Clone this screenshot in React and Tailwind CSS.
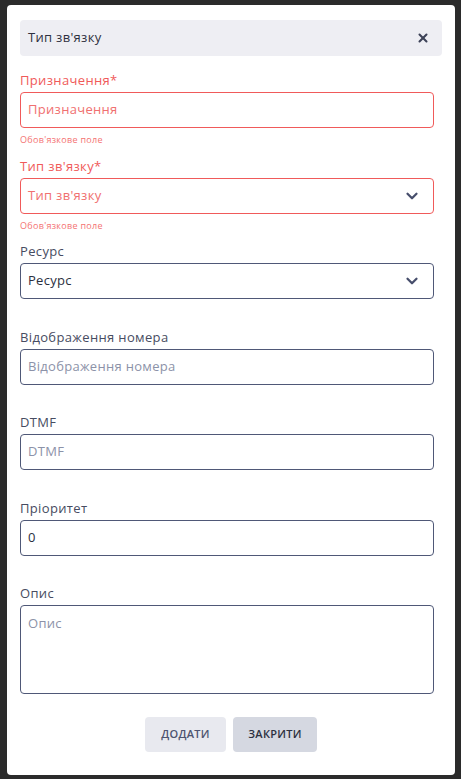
import { ChevronDown, X } from 'lucide-react';

const font = { fontFamily: '"Open Sans", "Noto Sans", sans-serif' };

const Field = ({ label, placeholder, value, error, select, last }) => {
  const red = !!error;
  return (
    <div>
      <label
        className={`block text-[13px] leading-4 mb-1 tracking-[0.35px] ${red ? 'text-[#f05a5a]' : 'text-[#474c61]'}`}
      >
        {label}
      </label>
      <div
        className={`relative h-9 flex items-center rounded-[4px] border pl-[7px] pr-3 text-[13px] tracking-[0.3px] ${
          red ? 'border-[#f05a5a]' : 'border-[#4f5877]'
        }`}
      >
        <span
          className={
            value ? 'text-[#2b2f3e]' : red ? 'text-[#f07070]' : 'text-[#8c92a8]'
          }
        >
          {value || placeholder}
        </span>
        {select && (
          <ChevronDown
            className="ml-auto w-[18px] h-[18px] text-[#474e6c]"
            strokeWidth={3}
          />
        )}
      </div>
      {!last && (
        <div className="h-[29.5px]">
          {error && (
            <p className="pt-[6px] text-[9px] leading-3 tracking-[0.3px] text-[#f47272]">{error}</p>
          )}
        </div>
      )}
    </div>
  );
};

export default function App() {
  return (
    <div className="min-h-screen bg-[#2b2b2b] pl-[7px] pt-[5px]" style={font}>
      <div className="w-[448px] h-[770px] bg-white rounded-[4px] px-[13px] pt-[15px]">
        {/* Header */}
        <div className="h-[36px] flex items-center justify-between bg-[#eeeef3] rounded-[4px] pl-2 pr-[12px]">
          <span className="text-[13px] tracking-[0.3px] text-[#2e3040]">Тип зв'язку</span>
          <X className="w-[14px] h-[14px] text-[#3d4257]" strokeWidth={3.5} />
        </div>

        {/* Form */}
        <div className="mt-4 pr-2">
          <Field label="Призначення*" placeholder="Призначення" error="Обов'язкове поле" />
          <Field label="Тип зв'язку*" placeholder="Тип зв'язку" error="Обов'язкове поле" select />
          <Field label="Ресурс" value="Ресурс" select />
          <Field label="Відображення номера" placeholder="Відображення номера" />
          <Field label="DTMF" placeholder="DTMF" />
          <Field label="Пріоритет" value="0" />

          <label className="block text-[13px] leading-4 mb-1 tracking-[0.35px] text-[#474c61]">Опис</label>
          <div className="h-[89px] rounded-[4px] border border-[#4f5877] pl-[7px] pt-[9px] text-[13px] leading-4 tracking-[0.3px] text-[#8c92a8]">
            Опис
          </div>
        </div>

        {/* Actions */}
        <div className="mt-[23px] flex justify-center gap-[7px]">
          <button className="h-[35px] w-[81px] rounded-[4px] bg-[#e8e9ef] text-[11px] font-semibold tracking-wide text-[#4e5470]">
            ДОДАТИ
          </button>
          <button className="h-[35px] w-[84px] rounded-[4px] bg-[#d5d8e1] text-[11px] font-semibold tracking-wide text-[#2c3040]">
            ЗАКРИТИ
          </button>
        </div>
      </div>
    </div>
  );
}
